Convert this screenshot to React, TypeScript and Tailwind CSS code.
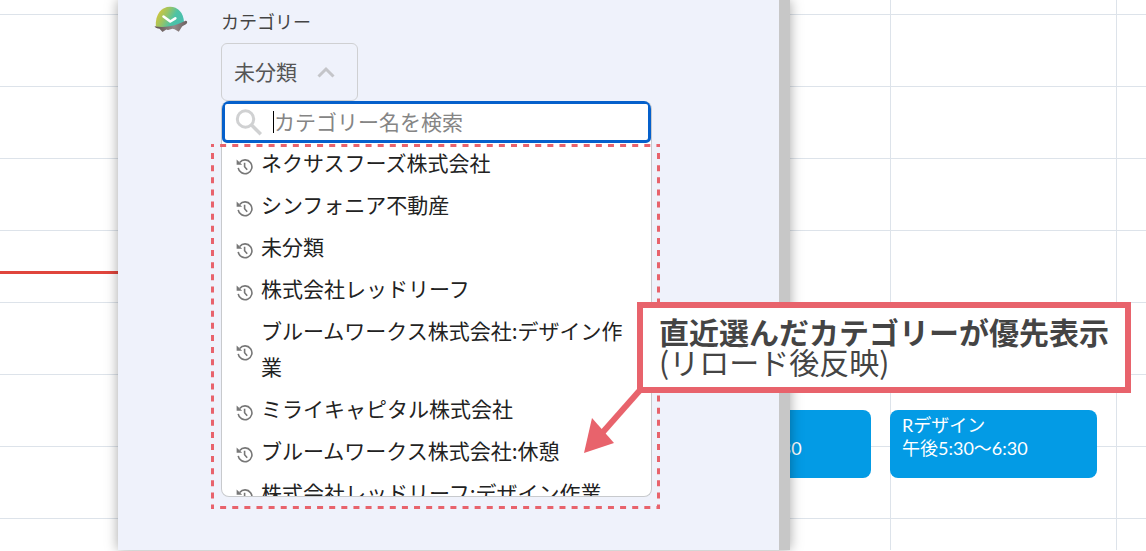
import { useState } from "react";

const HOURS = Array.from({ length: 8 }, (_, i) => i);

const categories = [
  "ネクサスフーズ株式会社",
  "シンフォニア不動産",
  "未分類",
  "株式会社レッドリーフ",
  "ブルームワークス株式会社:デザイン作業",
  "ミライキャピタル株式会社",
  "ブルームワークス株式会社:休憩",
  "株式会社レッドリーフ:デザイン作業",
];

type CalendarEvent = { title: string; time: string };

const days: { width: string; event?: CalendarEvent }[] = [
  { width: "w-[213px]" },
  { width: "w-[226px]" },
  { width: "w-[226px]" },
  { width: "w-[226px]", event: { title: "定例", time: "午後5:30〜6:30" } },
  { width: "w-[226px]", event: { title: "Rデザイン", time: "午後5:30〜6:30" } },
  { width: "grow min-w-0" },
];

const Logo = () => (
  <svg viewBox="0 0 34 28" className="w-[34px] h-7 shrink-0" aria-hidden="true">
    <defs>
      <linearGradient id="dome" x1="0" y1="0.1" x2="1" y2="0.5">
        <stop offset="0" stopColor="#e6c62c" />
        <stop offset="0.4" stopColor="#9cc463" />
        <stop offset="0.7" stopColor="#4dc3a5" />
        <stop offset="1" stopColor="#4abfae" />
      </linearGradient>
      <linearGradient id="rock" x1="0" y1="0" x2="1" y2="0">
        <stop offset="0" stopColor="#5d5150" />
        <stop offset="0.6" stopColor="#958a89" />
        <stop offset="1" stopColor="#6a5f5e" />
      </linearGradient>
    </defs>
    <path d="M1.8 21.5C1 9.500 7.500 1.800 16 1.800c8 0 13.500 6 14 15.200l-6 6H8z" fill="url(#dome)" />
    <path
      d="M0.500 21.300c5 .9 10 .9 15 0 6-1 10-2.500 15.500-5.300 1.800-.6 2.700 1 1.900 2.300-1 1.600-3.500 2.200-4.800 3.200l-3.300 5.200-4.300-2.500-2-.4-4.500 1.200-1.700-.5-3.800 2.500-3-3.300C3.500 23.700 1 23 .5 21.300z"
      fill="url(#rock)"
    />
    <path
      d="M9.500 11.500l6.800 5 5-3.200"
      fill="none"
      stroke="#fff"
      strokeWidth="2.6"
      strokeLinecap="round"
      strokeLinejoin="round"
    />
  </svg>
);

const HistoryIcon = () => (
  <svg
    viewBox="0 0 17 17"
    className="w-[17px] h-[17px] shrink-0 mt-2"
    fill="none"
    stroke="#777"
    strokeWidth="1.6"
    aria-hidden="true"
  >
    <path d="M2.200 9.800a6.900 6.900 0 1 0 1.500-5.400" />
    <path d="M.6 1.400v5.400h5.600z" fill="#777" stroke="none" />
    <path d="M8.600 4.800v4l2.600 3" />
  </svg>
);

const SearchIcon = () => (
  <svg
    viewBox="0 0 28 28"
    className="w-7 h-7 shrink-0"
    fill="none"
    stroke="#d0d1d2"
    strokeWidth="3"
    aria-hidden="true"
  >
    <circle cx="10.5" cy="11" r="8.2" />
    <path d="M16.3 16.800l9.500 9.500" strokeWidth="3.4" />
  </svg>
);

const Calendar = () => (
  <div className="flex h-full overflow-hidden">
    {days.map((day, index) => (
      <div
        key={index}
        className={`relative shrink-0 border-r border-[#dde3ea] last:border-r-0 ${day.width}`}
      >
        {HOURS.map((hour) => (
          <div
            key={hour}
            className="h-[72px] first:h-[15px] border-b border-[#dde3ea]"
          />
        ))}
        {index === 0 && (
          <div className="absolute inset-x-0 top-[271px] h-[3px] bg-[#e0453c]" />
        )}
        {day.event && (
          <div className="absolute -left-px right-[19px] top-[410px] h-[68px] rounded-lg bg-[#039be5] pt-1 px-3 text-lg leading-[23px] text-white whitespace-nowrap font-[Lato,'Noto_Sans_CJK_JP',sans-serif]">
            <p>{day.event.title}</p>
            <p>{day.event.time}</p>
          </div>
        )}
      </div>
    ))}
  </div>
);

const RecentHighlight = () => (
  <svg
    className="absolute -left-[10px] top-[43px] w-[449px] h-[365px] pointer-events-none"
    viewBox="0 0 449 365"
    stroke="#e8636c"
    strokeWidth="3"
    strokeDasharray="6 6.12"
    strokeDashoffset="3"
    aria-hidden="true"
  >
    <path d="M0 1.5H449M0 363.5H449M1.5 0V365M447.5 0V365" />
  </svg>
);

const CategoryPicker = () => {
  const [search, setSearch] = useState("");
  const [selected, setSelected] = useState("未分類");

  return (
    <div className="flex flex-col items-start">
      <label htmlFor="category" className="text-lg leading-6 text-[#444]">
        カテゴリー
      </label>
      <button
        id="category"
        className="mt-[10px] flex h-[58px] items-center gap-5 rounded-md border border-[#cfd0d2] pl-3 pr-[22px] text-[21px] text-[#555]"
      >
        {selected}
        <svg
          viewBox="0 0 18 12"
          className="w-[18px] h-3"
          fill="none"
          stroke="#c4c5c9"
          strokeWidth="3"
          aria-hidden="true"
        >
          <path d="M1.5 10.5L9 3l7.500 7.500" />
        </svg>
      </button>

      <div className="relative w-[431px]">
        <div className="h-[396px] overflow-hidden rounded-lg border border-t-0 border-[#c8cacd] bg-white">
          <div className="flex h-[42px] items-center rounded-[5px] border-[3px] border-[#0560cb] pl-[10px]">
            <SearchIcon />
            <span className="ml-[10px] h-[22px] w-px bg-black" />
            <input
              type="text"
              aria-label="カテゴリー名を検索"
              placeholder="カテゴリー名を検索"
              value={search}
              onChange={(e) => setSearch(e.target.value)}
              className="min-w-0 grow bg-transparent text-[21px] outline-none placeholder:text-[#858585]"
            />
          </div>
          <ul className="-mt-0.5">
            {categories
              .filter((name) => name.includes(search))
              .map((name) => (
                <li key={name}>
                  <button
                    className="flex w-full items-center gap-2 py-[3px] pl-[14px] pr-4 text-left text-[21px] leading-9 text-[#222]"
                    onClick={() => setSelected(name)}
                  >
                    <HistoryIcon />
                    {name}
                  </button>
                </li>
              ))}
          </ul>
        </div>
        <RecentHighlight />
      </div>
    </div>
  );
};

const Callout = () => (
  <div className="absolute left-[637px] top-[302px] border-[6px] border-[#e8636c] bg-white px-4 pt-2 pb-[11px] text-3xl leading-[30px] text-[#444] whitespace-nowrap">
    <p className="font-bold">直近選んだカテゴリーが優先表示</p>
    <p>(リロード後反映)</p>
    <svg
      viewBox="0 0 62 70"
      className="absolute -left-[60px] top-[78px] w-[62px] h-[70px]"
      aria-hidden="true"
    >
      <path d="M58 3L20 46" stroke="#e8636c" strokeWidth="6" />
      <path d="M1 67L9 32l22 25z" fill="#e8636c" />
    </svg>
  </div>
);

const App = () => {
  return (
    <main className="relative h-screen overflow-hidden bg-white pb-px font-['Noto_Sans_CJK_JP',sans-serif]">
      <Calendar />

      <section className="absolute top-0 bottom-px left-[118px] flex border-r-[11px] border-[#c7c7c7] bg-[#eff2fb] pl-9 pr-[127px] shadow-[0_0_12px_rgba(0,0,0,0.35)]">
        <div className="flex items-start gap-[33px]">
          <div className="pt-[5px]">
            <Logo />
          </div>
          <div className="pt-[9px]">
            <CategoryPicker />
          </div>
        </div>
      </section>

      <Callout />
    </main>
  );
};

export default App;
